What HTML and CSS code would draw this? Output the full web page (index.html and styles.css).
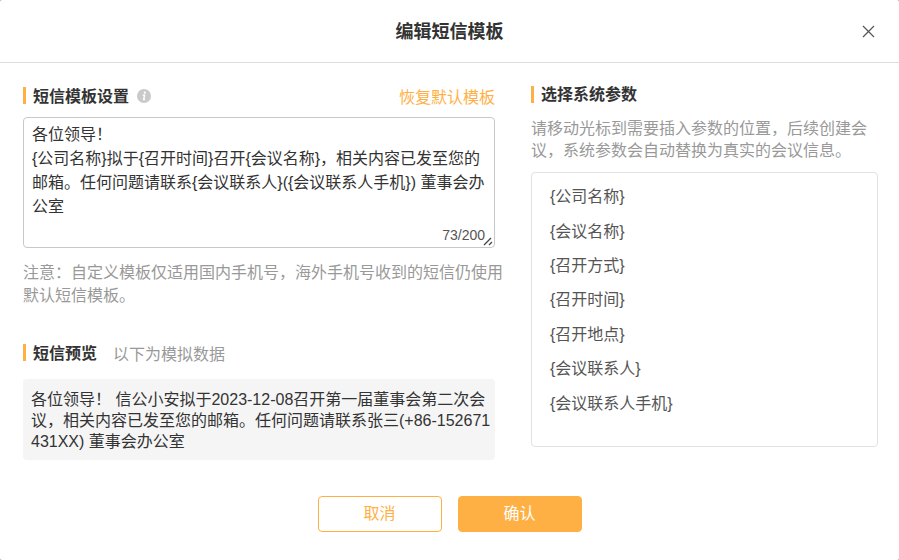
FILE: index.html
```html
<!DOCTYPE html>
<html lang="zh-CN">
<head>
    <meta charset="utf-8">
    <title>编辑短信模板</title>
    <link rel="stylesheet" href="styles.css">
</head>

<body>
    <div class="dialog" role="dialog" aria-labelledby="dialog-title">
        <header class="dialog-header">
            <h1 class="dialog-title" id="dialog-title">编辑短信模板</h1>
            <button class="close" type="button" aria-label="关闭">
                <svg width="13" height="13" viewBox="0 0 13 13"><path d="M1 1L12 12M12 1L1 12" stroke="#555" stroke-width="1.2" fill="none"/></svg>
            </button>
        </header>

        <div class="dialog-body">
            <section class="template">
                <div class="section-head">
                    <h2 class="section-title"><label for="template-text">短信模板设置</label></h2>
                    <svg class="info" width="14" height="14" viewBox="0 0 14 14">
                        <circle cx="7" cy="7" r="7" fill="#c9c9c9"/>
                        <circle cx="7.8" cy="3.7" r="1.1" fill="#fff"/>
                        <path d="M5.6 6.1H7.6L6.6 10.5H8.2" stroke="#fff" stroke-width="1.4" fill="none"/>
                    </svg>
                    <a class="restore" href="#">恢复默认模板</a>
                </div>
                <div class="editor">
                    <textarea class="editor-text" id="template-text" maxlength="200" spellcheck="false">各位领导！
{公司名称}拟于{召开时间}召开{会议名称}，相关内容已发至您的邮箱。任何问题请联系{会议联系人}({会议联系人手机}) 董事会办公室</textarea>
                    <span class="counter">73/200</span>
                    <svg class="grip" width="10" height="10" viewBox="0 0 10 10"><path d="M1 9L8 2M6 9L9 6" stroke="#444" stroke-width="1.3" fill="none"/></svg>
                </div>
                <p class="note">注意：自定义模板仅适用国内手机号，海外手机号收到的短信仍使用<br>默认短信模板。</p>

                <div class="section-head preview-head">
                    <h2 class="section-title">短信预览</h2>
                    <span class="hint">以下为模拟数据</span>
                </div>
                <p class="preview">各位领导！ 信公小安拟于2023-12-08召开第一届董事会第二次会议，相关内容已发至您的邮箱。任何问题请联系张三(+86-152671431XX) 董事会办公室</p>
            </section>

            <section class="params">
                <h2 class="section-title">选择系统参数</h2>
                <p class="params-desc">请移动光标到需要插入参数的位置，后续创建会<wbr>议，系统参数会自动替换为真实的会议信息。</p>
                <ul class="param-list">
                    <li><button class="param" type="button">{公司名称}</button></li>
                    <li><button class="param" type="button">{会议名称}</button></li>
                    <li><button class="param" type="button">{召开方式}</button></li>
                    <li><button class="param" type="button">{召开时间}</button></li>
                    <li><button class="param" type="button">{召开地点}</button></li>
                    <li><button class="param" type="button">{会议联系人}</button></li>
                    <li><button class="param" type="button">{会议联系人手机}</button></li>
                </ul>
            </section>
        </div>

        <footer class="dialog-footer">
            <button class="btn" type="button">取消</button>
            <button class="btn btn-primary" type="button">确认</button>
        </footer>
    </div>
</body>
</html>
```
FILE: styles.css
```css
* {
    box-sizing: border-box;
}

body {
    margin: 0;
    background-color: #aaa;
    color: #333;
    font-family: "Liberation Sans", "Noto Sans CJK SC", sans-serif;
    font-size: 16px;
}

h1, h2, p, ul {
    margin: 0;
    padding: 0;
}

button, textarea {
    font-family: inherit;
    font-size: 16px;
}

.dialog {
    min-height: 100vh;
    background-color: #fff;
    border-radius: 2px;
}

.dialog-header {
    position: relative;
    padding: 20px 0 18px;
    border-bottom: 1px solid #ddd;
    text-align: center;
}

.dialog-title {
    font-size: 18px;
    line-height: 24px;
}

.close {
    position: absolute;
    top: 20px;
    right: 19px;
    display: flex;
    padding: 5px;
    border: 0;
    background: none;
    cursor: pointer;
}

.dialog-body {
    display: grid;
    grid-template-columns: 472fr 347fr;
    column-gap: 36px;
    padding: 19px 21px 0 23px;
}

.template, .params {
    min-width: 0;
}

.section-head {
    display: flex;
    align-items: center;
    height: 28px;
}

.section-title {
    display: flex;
    align-items: center;
    padding-top: 1px;
    font-size: 16px;
    line-height: 24px;
}

.section-title::before {
    content: "";
    width: 3px;
    height: 17px;
    margin: 0 7px 2px 0;
    background-color: #ffb045;
}

.info {
    margin-left: 8px;
}

.restore {
    margin-left: auto;
    color: #ffb045;
    text-decoration: none;
}

.editor {
    position: relative;
    margin-top: 7px;
}

.editor-text {
    display: block;
    width: 100%;
    height: 131px;
    padding: 5px 8px 3px;
    border: 1px solid #c8c8c8;
    border-radius: 4px;
    outline: none;
    background-color: #fff;
    color: #333;
    line-height: 24px;
    resize: none;
}

.counter {
    position: absolute;
    right: 10px;
    bottom: 4px;
    color: #555;
    font-size: 14px;
    line-height: 18px;
}

.grip {
    position: absolute;
    right: 2px;
    bottom: 2px;
}

.note {
    margin-top: 13px;
    color: #999;
    line-height: 23px;
    white-space: nowrap;
}

.preview-head {
    margin-top: 32px;
}

.hint {
    margin-left: 16px;
    color: #999;
}

.preview {
    margin-top: 12px;
    padding: 10px 4px 8px 8px;
    border-radius: 4px;
    background-color: #f5f5f5;
    line-height: 21px;
    word-break: break-all;
}

.params-desc {
    margin-top: 11px;
    color: #999;
    line-height: 22px;
}

.param-list {
    display: flex;
    flex-direction: column;
    min-height: 275px;
    margin-top: 10px;
    padding: 7px 18px 25px;
    border: 1px solid #e2e2e2;
    border-radius: 4px;
    list-style: none;
}

.param-list li {
    display: flex;
    flex: 1;
    align-items: center;
}

.param {
    padding: 0;
    border: 0;
    background: none;
    color: #555;
    line-height: 24px;
    cursor: pointer;
}

.dialog-footer {
    display: flex;
    justify-content: center;
    gap: 16px;
    padding: 36px 0 28px;
}

.btn {
    width: 124px;
    height: 36px;
    padding: 0 0 4px;
    border: 1px solid #ffb045;
    border-radius: 4px;
    background-color: #fff;
    color: #ffb045;
    cursor: pointer;
}

.btn-primary {
    background-color: #ffb045;
    color: #fff;
}
```
